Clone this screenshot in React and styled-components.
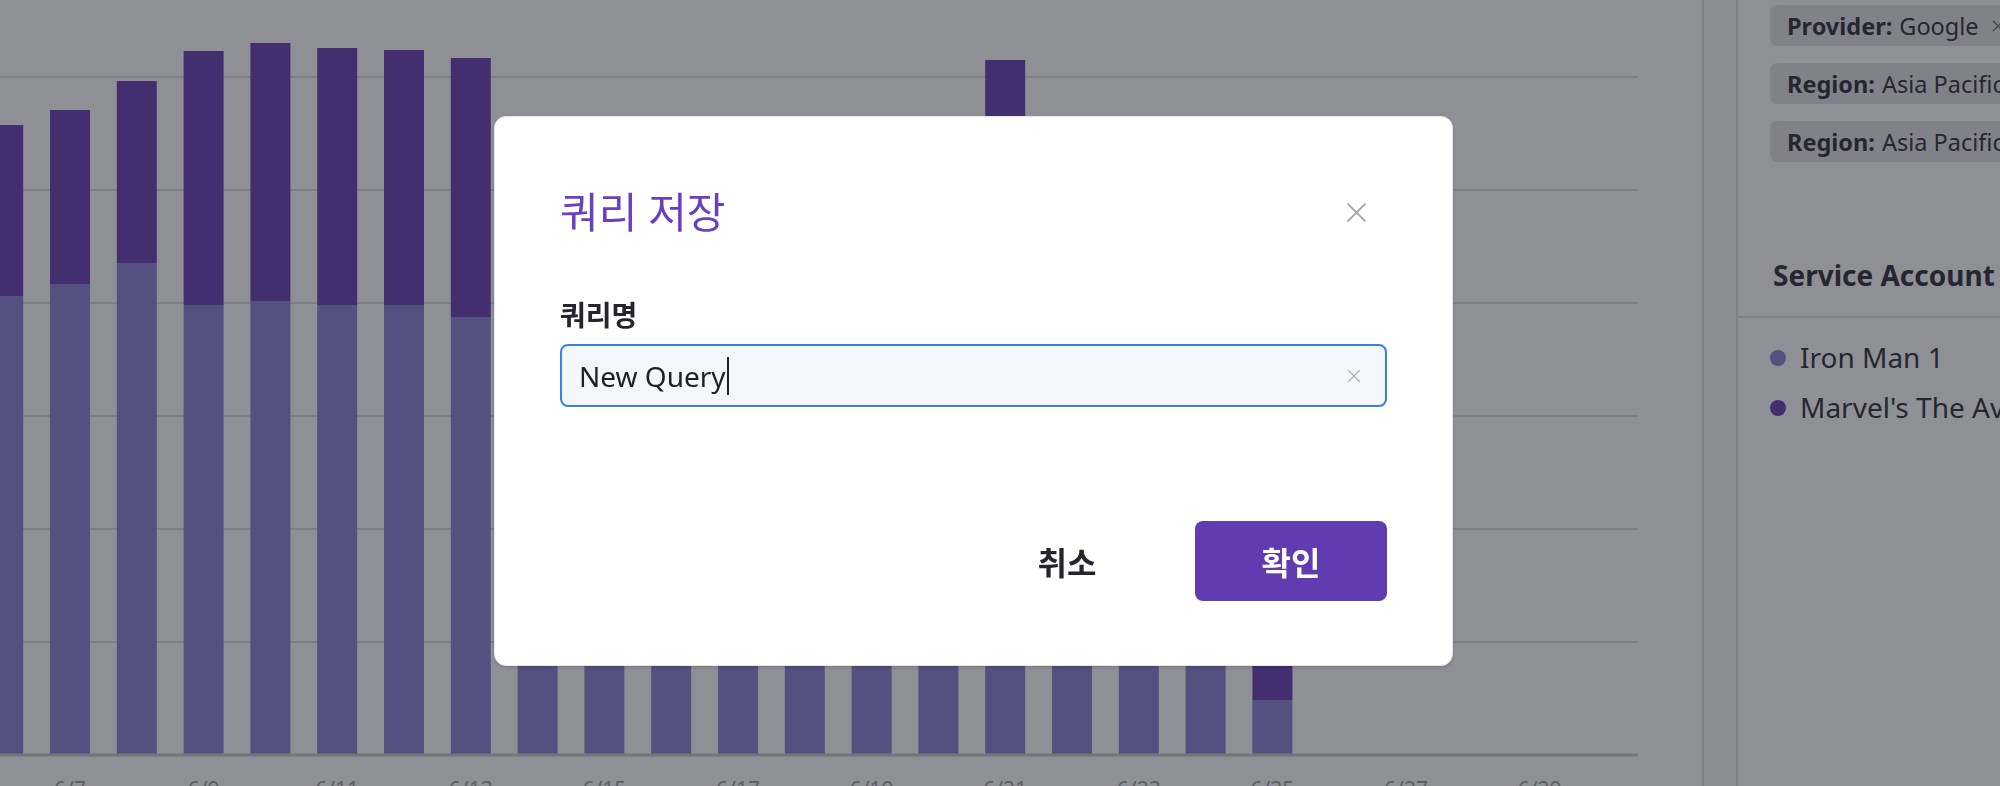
import styled, { createGlobalStyle } from "styled-components";

const GlobalStyle = createGlobalStyle`
  html, body {
    margin: 0;
    padding: 0;
    overflow: hidden;
    background: #fff;
  }
  body {
    font-family: "Noto Sans", "Noto Sans CJK KR", sans-serif;
  }
`;

// stacked bars from 6/6 to 6/25: [top of bar, top of lower segment] (baseline = 755)
const bars = [
  [125, 296],
  [110, 284],
  [81, 263],
  [51, 305],
  [43, 301],
  [48, 305],
  [50, 305],
  [58, 317],
  [160, 420],
  [170, 430],
  [150, 410],
  [180, 440],
  [190, 450],
  [200, 470],
  [230, 500],
  [60, 330],
  [260, 520],
  [280, 540],
  [300, 560],
  [560, 700],
];

const BASELINE = 755;
const PITCH = 66.8;
const BAR_W = 40;
const FIRST_X = 50 - PITCH;
const gridYs = [77, 190, 303, 416, 529, 642];

const chips = [
  { key: "Provider:", value: "Google" },
  { key: "Region:", value: "Asia Pacific (Seoul)" },
  { key: "Region:", value: "Asia Pacific (Tokyo)" },
];

const accounts = [
  { name: "Iron Man 1", color: "#897fd3" },
  { name: "Marvel's The Avengers", color: "#673db3" },
];

const CloseIcon = ({ size, stroke }) => (
  <svg width={size} height={size} viewBox="0 0 20 20" fill="none">
    <path
      d="M2 2L18 18M18 2L2 18"
      stroke="currentColor"
      strokeWidth={stroke}
      strokeLinecap="round"
    />
  </svg>
);

const UsageChart = () => (
  <ChartSvg width="1702" height="786">
    {gridYs.map((y) => (
      <line key={y} x1="0" x2="1638" y1={y} y2={y} stroke="#dcdcdc" strokeWidth="2" />
    ))}
    {bars.map(([top, split], i) => {
      const x = FIRST_X + i * PITCH;
      return (
        <g key={i}>
          <rect x={x} y={top} width={BAR_W} height={split - top} fill="#673db3" />
          <rect x={x} y={split} width={BAR_W} height={BASELINE - split} fill="#897fd3" />
        </g>
      );
    })}
    <line x1="0" x2="1638" y1={BASELINE} y2={BASELINE} stroke="#c8c8cc" strokeWidth="3" />
    {Array.from({ length: 12 }).map((_, i) => {
      const day = 7 + i * 2;
      const cx = 50 + i * 2 * PITCH + BAR_W / 2;
      return (
        <text
          key={day}
          x={cx}
          y="797"
          textAnchor="middle"
          fontSize="21"
          fill="#9a9a9e"
          fontFamily="Noto Sans, sans-serif"
        >
          6/{day}
        </text>
      );
    })}
  </ChartSvg>
);

export default function App() {
  return (
    <>
      <GlobalStyle />
      <Page>
        <ChartArea>
          <UsageChart />
        </ChartArea>
        <ScrollTrack />
        <SidePanel>
          <ChipList>
            {chips.map((c, i) => (
              <Chip key={i}>
                <b>{c.key}</b> {c.value}
                <ChipX>
                  <CloseIcon size={12} stroke={2} />
                </ChipX>
              </Chip>
            ))}
          </ChipList>
          <SectionTitle>Service Account</SectionTitle>
          <AccountList>
            {accounts.map((a) => (
              <AccountItem key={a.name}>
                <Dot color={a.color} />
                {a.name}
              </AccountItem>
            ))}
          </AccountList>
        </SidePanel>
      </Page>

      <Backdrop>
        <Modal>
          <ModalHeader>
            <ModalTitle>쿼리 저장</ModalTitle>
            <CloseButton>
              <CloseIcon size={21} stroke={1.8} />
            </CloseButton>
          </ModalHeader>
          <FieldLabel>쿼리명</FieldLabel>
          <Field>
            <FieldText>
              New Query
              <Caret />
            </FieldText>
            <ClearButton>
              <CloseIcon size={14} stroke={1.7} />
            </ClearButton>
          </Field>
          <Footer>
            <Button>취소</Button>
            <Button primary>확인</Button>
          </Footer>
        </Modal>
      </Backdrop>
    </>
  );
}

const Page = styled.div`
  width: 2000px;
  height: 786px;
  display: flex;
  overflow: hidden;
  background: #fff;
`;

const ChartArea = styled.div`
  width: 1702px;
  flex-shrink: 0;
  overflow: hidden;
`;

const ChartSvg = styled.svg`
  display: block;
`;

const ScrollTrack = styled.div`
  width: 32px;
  flex-shrink: 0;
  border-left: 2px solid #dfdfdf;
  border-right: 2px solid #dfdfdf;
  background: #f8f8f8;
`;

const SidePanel = styled.div`
  flex: 1;
  min-width: 0;
  display: flex;
  flex-direction: column;
  overflow: hidden;
  color: #2d2b39;
`;

const ChipList = styled.div`
  display: flex;
  flex-direction: column;
  align-items: flex-start;
  gap: 17px;
  padding: 5px 0 0 32px;
`;

const Chip = styled.div`
  display: flex;
  align-items: center;
  height: 41px;
  padding: 0 17px;
  border-radius: 7px;
  background: #e2e2e6;
  font-size: 23.5px;
  white-space: nowrap;
  b {
    font-weight: 700;
    margin-right: 7px;
  }
`;

const ChipX = styled.span`
  display: flex;
  margin-left: 13px;
  color: #555;
`;

const SectionTitle = styled.div`
  margin-top: 95px;
  padding: 0 0 23px 35px;
  font-size: 28px;
  font-weight: 700;
  line-height: 36px;
  white-space: nowrap;
  border-bottom: 2px solid #dfdfdf;
`;

const AccountList = styled.div`
  display: flex;
  flex-direction: column;
  gap: 11px;
  padding: 20px 0 0 32px;
`;

const AccountItem = styled.div`
  display: flex;
  align-items: center;
  gap: 14px;
  font-size: 28px;
  line-height: 39px;
  white-space: nowrap;
`;

const Dot = styled.span`
  width: 16px;
  height: 16px;
  border-radius: 50%;
  background: ${({ color }) => color};
  flex-shrink: 0;
`;

const Backdrop = styled.div`
  position: fixed;
  inset: 0;
  background: rgba(31, 33, 43, 0.5);
  display: flex;
  align-items: flex-start;
  justify-content: flex-start;
  padding: 116px 0 0 494px;
`;

const Modal = styled.div`
  box-sizing: border-box;
  width: 959px;
  height: 550px;
  padding: 70px 65px 64px;
  background: #fff;
  border: 1px solid #e4e4e9;
  border-radius: 12px;
  box-shadow: 0 2px 3px rgba(0, 0, 0, 0.12);
  display: flex;
  flex-direction: column;
`;

const ModalHeader = styled.div`
  display: flex;
  align-items: center;
  justify-content: space-between;
`;

const ModalTitle = styled.h2`
  margin: 0;
  font-size: 42px;
  line-height: 50px;
  font-weight: 400;
  color: #6a3fc0;
`;

const CloseButton = styled.button`
  display: flex;
  padding: 0;
  margin-right: 20px;
  border: none;
  background: none;
  color: #a3a3ab;
  cursor: pointer;
`;

const FieldLabel = styled.label`
  margin-top: 62px;
  font-size: 28px;
  line-height: 32px;
  font-weight: 700;
  color: #26252e;
`;

const Field = styled.div`
  margin-top: 13px;
  box-sizing: border-box;
  height: 63px;
  display: flex;
  align-items: center;
  justify-content: space-between;
  padding: 0 24px 0 17px;
  border: 2px solid #3b80e2;
  border-radius: 8px;
  background: #f3f6fb;
`;

const FieldText = styled.span`
  display: flex;
  align-items: center;
  font-size: 28px;
  color: #1f1f26;
`;

const Caret = styled.span`
  width: 2px;
  height: 38px;
  margin-left: 1px;
  background: #1f1f26;
`;

const ClearButton = styled.span`
  display: flex;
  color: #a8a8ae;
`;

const Footer = styled.div`
  margin-top: auto;
  display: flex;
  justify-content: flex-end;
  gap: 32px;
`;

const Button = styled.button`
  width: 192px;
  height: 80px;
  border: none;
  border-radius: 8px;
  font-family: inherit;
  font-size: 32px;
  font-weight: 700;
  cursor: pointer;
  color: ${({ primary }) => (primary ? "#fff" : "#26252e")};
  background: ${({ primary }) => (primary ? "#613cb0" : "transparent")};
`;
